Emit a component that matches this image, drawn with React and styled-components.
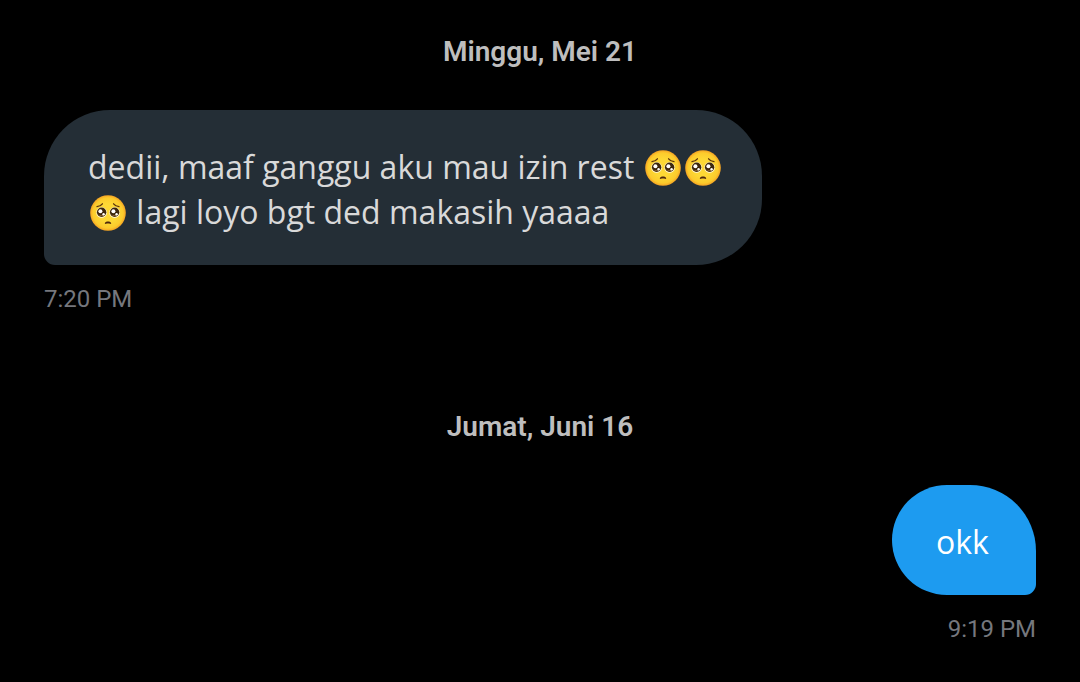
import React from "react";
import styled, { createGlobalStyle } from "styled-components";

const GlobalStyle = createGlobalStyle`
  * { box-sizing: border-box; }
  body { margin: 0; background: #000; }
`;

const Conversation = styled.main`
  display: flex;
  flex-direction: column;
  padding: 35px 44px 36px;
  font-family: Roboto, sans-serif;
`;

const DateHeading = styled.h2`
  margin: 0 0 41px;
  color: #bebebe;
  font-size: 28px;
  font-weight: 600;
  line-height: 34px;
  text-align: center;
`;

const Message = styled.article`
  display: flex;
  flex-direction: column;
  align-items: ${(p) => (p.$sent ? "flex-end" : "flex-start")};
  margin-bottom: ${(p) => (p.$sent ? "0" : "96px")};
`;

const Bubble = styled.p`
  margin: 0;
  min-width: 144px;
  max-width: 718px;
  padding: 34px 36px 31px 44px;
  border-radius: ${(p) => (p.$sent ? "55px 66px 11px 55px" : "66px 66px 66px 11px")};
  background: ${(p) => (p.$sent ? "#1d9bf0" : "#242e36")};
  color: ${(p) => (p.$sent ? "#fff" : "#d9d9d9")};
  font-family: "Open Sans", sans-serif;
  font-size: 32px;
  line-height: 45px;
`;

const Time = styled.time`
  margin-top: 20px;
  color: #75777d;
  font-size: 24px;
  line-height: 29px;
`;

const EmojiIcon = styled.svg`
  width: 36px;
  height: 36px;
  margin: 0 2px;
  vertical-align: -7px;
`;

function Pleading() {
  return (
    <EmojiIcon viewBox="0 0 36 36" role="img" aria-label="🥺">
      <defs>
        <radialGradient id="face" cx="50%" cy="50%" r="50%">
          <stop offset="0.5" stopColor="#fdd835" />
          <stop offset="0.85" stopColor="#fccb2c" />
          <stop offset="1" stopColor="#f4a223" />
        </radialGradient>
      </defs>
      <circle cx="18" cy="18" r="17.8" fill="url(#face)" />
      <g fill="none" stroke="#5c350c" strokeWidth="1.3" strokeLinecap="round">
        <path d="M7 11.6C9.2 11.4 11.2 10.4 12.4 8.8" />
        <path d="M29 11.6C26.8 11.4 24.8 10.4 23.6 8.8" />
      </g>
      <path d="M14.8 28.3C15.2 25.9 20.8 25.9 21.2 28.3C21.2 29.1 20.5 29 20 28.8C18.7 28.4 17.3 28.4 16 28.8C15.5 29 14.8 29.1 14.8 28.3Z" fill="#4e280c" />
      {[11.6, 24.6].map((x) => (
        <g key={x}>
          <circle cx={x} cy="17.5" r="5.4" fill="#fff3c4" />
          <circle cx={x} cy="17.3" r="4.7" fill="#3d270c" />
          <path d={`M${x - 3.4} 19.6Q${x} 23 ${x + 3.4} 19.6Q${x} 21 ${x - 3.4} 19.6Z`} fill="#8a6435" />
          <circle cx={x - 1.2} cy="16.2" r="2" fill="#fff" />
          <circle cx={x + 2} cy="19.2" r="1.2" fill="#fff" />
        </g>
      ))}
    </EmojiIcon>
  );
}

export default function App() {
  return (
    <>
      <GlobalStyle />
      <Conversation>
        <DateHeading>Minggu, Mei 21</DateHeading>
        <Message>
          <Bubble>
            dedii, maaf ganggu aku mau izin rest <Pleading /><Pleading /><Pleading /> lagi loyo bgt ded makasih yaaaa
          </Bubble>
          <Time>7:20 PM</Time>
        </Message>
        <DateHeading>Jumat, Juni 16</DateHeading>
        <Message $sent>
          <Bubble $sent>okk</Bubble>
          <Time>9:19 PM</Time>
        </Message>
      </Conversation>
    </>
  );
}
